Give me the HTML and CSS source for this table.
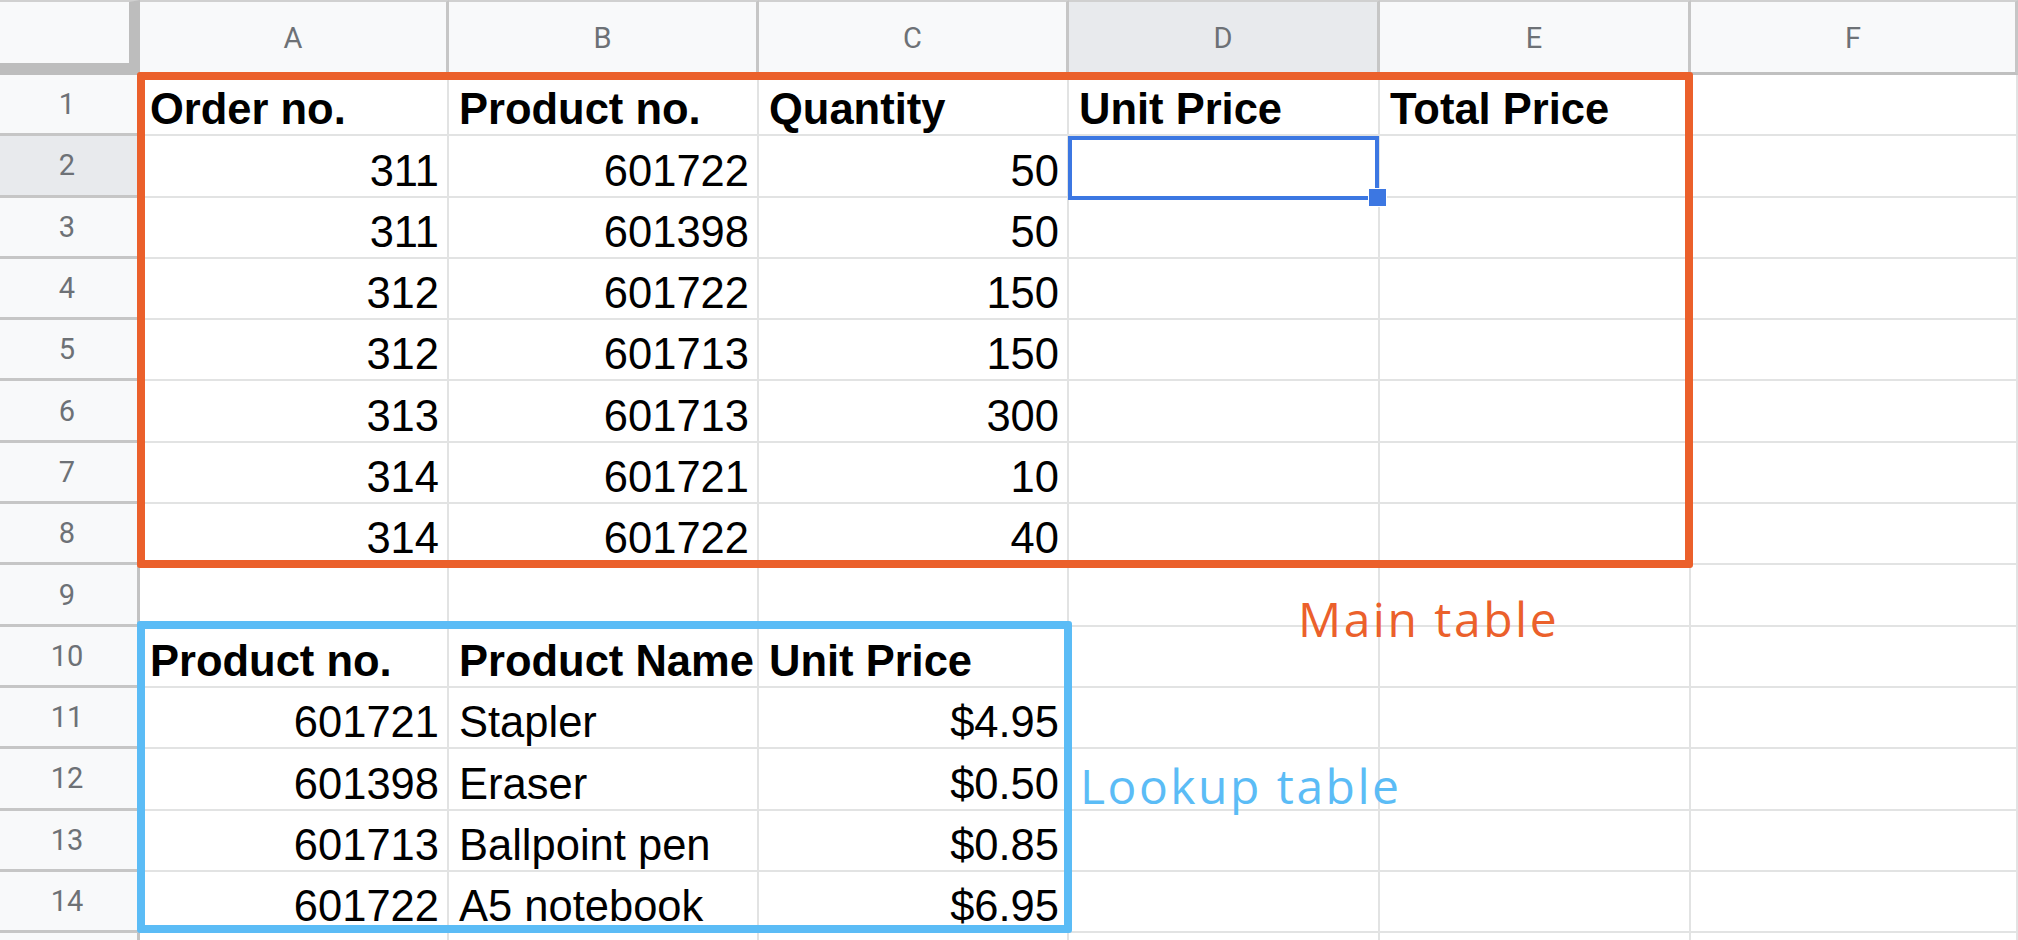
FILE: index.html
```html
<!DOCTYPE html>
<html lang="en">
<head>
<meta charset="utf-8">
<title>Lookup sheet</title>
<link rel="stylesheet" href="styles.css">
</head>
<body>
<div class="sheet">
  <div class="grid">
    <div class="corner"></div>
    <div class="colhead">A</div>
    <div class="colhead">B</div>
    <div class="colhead">C</div>
    <div class="colhead active">D</div>
    <div class="colhead">E</div>
    <div class="colhead">F</div>

    <div class="rowhead">1</div>
    <div class="cell b">Order no.</div>
    <div class="cell b">Product no.</div>
    <div class="cell b">Quantity</div>
    <div class="cell b">Unit Price</div>
    <div class="cell b">Total Price</div>
    <div class="cell"></div>

    <div class="rowhead active">2</div>
    <div class="cell r">311</div>
    <div class="cell r">601722</div>
    <div class="cell r">50</div>
    <div class="cell"></div>
    <div class="cell"></div>
    <div class="cell"></div>

    <div class="rowhead">3</div>
    <div class="cell r">311</div>
    <div class="cell r">601398</div>
    <div class="cell r">50</div>
    <div class="cell"></div>
    <div class="cell"></div>
    <div class="cell"></div>

    <div class="rowhead">4</div>
    <div class="cell r">312</div>
    <div class="cell r">601722</div>
    <div class="cell r">150</div>
    <div class="cell"></div>
    <div class="cell"></div>
    <div class="cell"></div>

    <div class="rowhead">5</div>
    <div class="cell r">312</div>
    <div class="cell r">601713</div>
    <div class="cell r">150</div>
    <div class="cell"></div>
    <div class="cell"></div>
    <div class="cell"></div>

    <div class="rowhead">6</div>
    <div class="cell r">313</div>
    <div class="cell r">601713</div>
    <div class="cell r">300</div>
    <div class="cell"></div>
    <div class="cell"></div>
    <div class="cell"></div>

    <div class="rowhead">7</div>
    <div class="cell r">314</div>
    <div class="cell r">601721</div>
    <div class="cell r">10</div>
    <div class="cell"></div>
    <div class="cell"></div>
    <div class="cell"></div>

    <div class="rowhead">8</div>
    <div class="cell r">314</div>
    <div class="cell r">601722</div>
    <div class="cell r">40</div>
    <div class="cell"></div>
    <div class="cell"></div>
    <div class="cell"></div>

    <div class="rowhead">9</div>
    <div class="cell"></div>
    <div class="cell"></div>
    <div class="cell"></div>
    <div class="cell"></div>
    <div class="cell"></div>
    <div class="cell"></div>

    <div class="rowhead">10</div>
    <div class="cell b">Product no.</div>
    <div class="cell b">Product Name</div>
    <div class="cell b">Unit Price</div>
    <div class="cell"></div>
    <div class="cell"></div>
    <div class="cell"></div>

    <div class="rowhead">11</div>
    <div class="cell r">601721</div>
    <div class="cell">Stapler</div>
    <div class="cell r">$4.95</div>
    <div class="cell"></div>
    <div class="cell"></div>
    <div class="cell"></div>

    <div class="rowhead">12</div>
    <div class="cell r">601398</div>
    <div class="cell">Eraser</div>
    <div class="cell r">$0.50</div>
    <div class="cell"></div>
    <div class="cell"></div>
    <div class="cell"></div>

    <div class="rowhead">13</div>
    <div class="cell r">601713</div>
    <div class="cell">Ballpoint pen</div>
    <div class="cell r">$0.85</div>
    <div class="cell"></div>
    <div class="cell"></div>
    <div class="cell"></div>

    <div class="rowhead">14</div>
    <div class="cell r">601722</div>
    <div class="cell">A5 notebook</div>
    <div class="cell r">$6.95</div>
    <div class="cell"></div>
    <div class="cell"></div>
    <div class="cell"></div>

    <div class="rowhead"></div>
    <div class="cell"></div>
    <div class="cell"></div>
    <div class="cell"></div>
    <div class="cell"></div>
    <div class="cell"></div>
    <div class="cell"></div>
  </div>

  <div class="box box-main"></div>
  <div class="box box-lookup"></div>
  <div class="selection"><span class="handle"></span></div>
  <div class="note note-main">Main table</div>
  <div class="note note-lookup">Lookup table</div>
</div>
</body>
</html>
```

FILE: styles.css
```css
* { box-sizing: border-box; }

html, body {
  margin: 0;
  padding: 0;
  background: #ffffff;
}

.sheet {
  position: relative;
  width: 2018px;
  height: 940px;
  overflow: hidden;
  background: #ffffff;
}

.grid {
  display: grid;
  grid-template-columns: 140px 309px 310px 310px 311px 311px 1fr;
  grid-template-rows: 75px repeat(15, 61.3px);
}

.corner {
  background: #f8f9fa;
  border-right: 11px solid #bdbdbd;
  border-bottom: 12px solid #bdbdbd;
  border-top: 2px solid #d0d0d0;
}

.colhead {
  display: flex;
  align-items: center;
  justify-content: center;
  background: #f8f9fa;
  border-top: 2px solid #d0d0d0;
  border-right: 3px solid #c6c6c6;
  border-bottom: 3px solid #c0c0c0;
  color: #6d7176;
  font-family: Roboto, "Liberation Sans", sans-serif;
  font-size: 29px;
  padding-top: 2px;
}

.colhead.active,
.rowhead.active {
  background: #e8eaed;
}

.rowhead {
  display: flex;
  align-items: center;
  justify-content: center;
  background: #f8f9fa;
  border-right: 3px solid #c2c2c2;
  border-bottom: 3px solid #c6c6c6;
  color: #6d7176;
  font-family: Roboto, "Liberation Sans", sans-serif;
  font-size: 29px;
  padding-right: 3px;
}

.cell {
  display: flex;
  align-items: flex-end;
  justify-content: flex-start;
  border-right: 2px solid #e2e3e3;
  border-bottom: 2px solid #e2e3e3;
  padding: 0 8px 3px 10px;
  font-family: "Liberation Sans", Arial, sans-serif;
  font-size: 43.5px;
  line-height: 44px;
  color: #000000;
  white-space: nowrap;
  overflow: visible;
}

.cell.r {
  justify-content: flex-end;
}

.cell.b {
  font-weight: 700;
}

.box {
  position: absolute;
  border-style: solid;
  border-width: 8px;
  border-radius: 3px;
}

.box-main {
  left: 137px;
  top: 72px;
  width: 1556px;
  height: 496px;
  border-color: #eb602b;
}

.box-lookup {
  left: 137px;
  top: 621px;
  width: 935px;
  height: 312px;
  border-color: #5bbcf6;
}

.selection {
  position: absolute;
  left: 1068px;
  top: 136px;
  width: 311px;
  height: 64px;
  border: 4px solid #3c77e2;
}

.handle {
  position: absolute;
  right: -12px;
  bottom: -11px;
  width: 19px;
  height: 19px;
  background: #3c77e2;
  border: 1px solid #ffffff;
}

.note {
  position: absolute;
  font-family: "Open Sans", Lato, sans-serif;
  font-size: 48px;
  line-height: 49px;
  letter-spacing: 2.5px;
  white-space: nowrap;
}

.note-main {
  left: 1298px;
  top: 594px;
  color: #eb602b;
}

.note-lookup {
  left: 1080px;
  top: 761px;
  color: #5bbcf6;
}
```
